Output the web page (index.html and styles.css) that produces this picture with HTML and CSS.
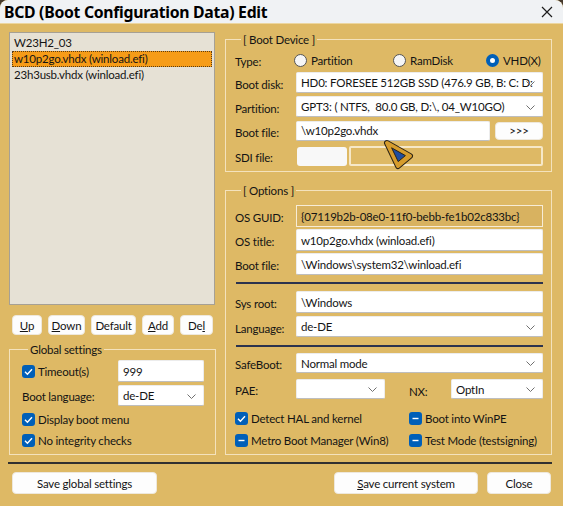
FILE: index.html
```html
<!DOCTYPE html>
<html lang="en">
<head>
    <meta charset="UTF-8">
    <meta name="viewport" content="width=device-width, initial-scale=1.0">
    <title>BCD (Boot Configuration Data) Edit</title>

    <link rel="stylesheet" href="styles.css">
</head>
<body>

<div class="window">

    <div class="titlebar">
        <span class="title">BCD (Boot Configuration Data) Edit</span>
        <svg class="close" width="12" height="12" viewBox="0 0 12 12">
            <path d="M1 1 L11 11 M11 1 L1 11" stroke="#1c1c1c" stroke-width="1.2" fill="none"/>
        </svg>
    </div>

    <div class="main">

        <div class="left">

            <div class="list">
                <div class="item">W23H2_03</div>
                <div class="item selected">w10p2go.vhdx (winload.efi)</div>
                <div class="item">23h3usb.vhdx (winload.efi)</div>
            </div>

            <div class="list_buttons">
                <button class="btn btn_up"><u>U</u>p</button>
                <button class="btn btn_down"><u>D</u>own</button>
                <button class="btn btn_default">Default</button>
                <button class="btn btn_add"><u>A</u>dd</button>
                <button class="btn btn_del">De<u>l</u></button>
            </div>

            <fieldset class="group global">
                <legend>Global settings</legend>

                <div class="g_row g_row_timeout">
                    <span class="check"><span class="box"><svg width="13" height="13"><polyline points="3,6.8 5.4,9.2 10,4.2" stroke="#fff" stroke-width="1.4" fill="none"/></svg></span>Timeout(s)</span>
                    <div class="field g_field">999</div>
                </div>

                <div class="g_row g_row_lang">
                    <span class="g_label">Boot language:</span>
                    <div class="field g_field select">de-DE<svg class="chev" width="9" height="5"><polyline points="0.5,0.5 4.5,4.5 8.5,0.5" stroke="#707070" fill="none"/></svg></div>
                </div>

                <div class="g_row g_row_check">
                    <span class="check"><span class="box"><svg width="13" height="13"><polyline points="3,6.8 5.4,9.2 10,4.2" stroke="#fff" stroke-width="1.4" fill="none"/></svg></span>Display boot menu</span>
                </div>

                <div class="g_row g_row_check last">
                    <span class="check"><span class="box"><svg width="13" height="13"><polyline points="3,6.8 5.4,9.2 10,4.2" stroke="#fff" stroke-width="1.4" fill="none"/></svg></span>No integrity checks</span>
                </div>
            </fieldset>

        </div>

        <div class="right">

            <fieldset class="group device">
                <legend>[ Boot Device ]</legend>

                <div class="row row_type">
                    <span class="label">Type:</span>
                    <span class="radio radio_partition"><span class="dot"></span>Partition</span>
                    <span class="radio radio_ramdisk"><span class="dot"></span>RamDisk</span>
                    <span class="radio radio_vhd"><span class="dot on"></span>VHD(X)</span>
                </div>

                <div class="row">
                    <span class="label">Boot disk:</span>
                    <div class="field select">HD0: FORESEE 512GB SSD (476.9 GB, B: C: D:<svg class="chev" width="9" height="5"><polyline points="0.5,0.5 4.5,4.5 8.5,0.5" stroke="#707070" fill="none"/></svg></div>
                </div>

                <div class="row">
                    <span class="label">Partition:</span>
                    <div class="field select">GPT3: ( NTFS,&nbsp; 80.0 GB, D:\, 04_W10GO)<svg class="chev" width="9" height="5"><polyline points="0.5,0.5 4.5,4.5 8.5,0.5" stroke="#707070" fill="none"/></svg></div>
                </div>

                <div class="row row_file">
                    <span class="label">Boot file:</span>
                    <div class="field file_field">\w10p2go.vhdx</div>
                    <button class="btn browse">&gt;&gt;&gt;</button>
                </div>

                <div class="row row_sdi">
                    <span class="label">SDI file:</span>
                    <div class="sdi_small"></div>
                    <div class="sdi_big"></div>
                </div>
            </fieldset>

            <fieldset class="group options">
                <legend>[ Options ]</legend>

                <div class="row row_tall">
                    <span class="label">OS GUID:</span>
                    <div class="field guid">{07119b2b-08e0-11f0-bebb-fe1b02c833bc}</div>
                </div>

                <div class="row row_tall">
                    <span class="label">OS title:</span>
                    <div class="field">w10p2go.vhdx (winload.efi)</div>
                </div>

                <div class="row row_tall">
                    <span class="label">Boot file:</span>
                    <div class="field">\Windows\system32\winload.efi</div>
                </div>

                <div class="sep sep_1"></div>

                <div class="row row_tall">
                    <span class="label">Sys root:</span>
                    <div class="field">\Windows</div>
                </div>

                <div class="row">
                    <span class="label">Language:</span>
                    <div class="field select">de-DE<svg class="chev" width="9" height="5"><polyline points="0.5,0.5 4.5,4.5 8.5,0.5" stroke="#707070" fill="none"/></svg></div>
                </div>

                <div class="sep sep_2"></div>

                <div class="row row_safe">
                    <span class="label">SafeBoot:</span>
                    <div class="field select">Normal mode<svg class="chev" width="9" height="5"><polyline points="0.5,0.5 4.5,4.5 8.5,0.5" stroke="#707070" fill="none"/></svg></div>
                </div>

                <div class="row row_pae">
                    <span class="label">PAE:</span>
                    <div class="field select pae_field"><svg class="chev" width="9" height="5"><polyline points="0.5,0.5 4.5,4.5 8.5,0.5" stroke="#707070" fill="none"/></svg></div>
                    <span class="nx_label">NX:</span>
                    <div class="field select nx_field">OptIn<svg class="chev" width="9" height="5"><polyline points="0.5,0.5 4.5,4.5 8.5,0.5" stroke="#707070" fill="none"/></svg></div>
                </div>

                <div class="checks">
                    <span class="check"><span class="box"><svg width="13" height="13"><polyline points="3,6.8 5.4,9.2 10,4.2" stroke="#fff" stroke-width="1.4" fill="none"/></svg></span>Detect HAL and kernel</span>
                    <span class="check"><span class="box"><svg width="13" height="13"><path d="M3.5 6.5 H9.5" stroke="#fff" stroke-width="1.4"/></svg></span>Boot into WinPE</span>
                    <span class="check"><span class="box"><svg width="13" height="13"><path d="M3.5 6.5 H9.5" stroke="#fff" stroke-width="1.4"/></svg></span>Metro Boot Manager (Win8)</span>
                    <span class="check"><span class="box"><svg width="13" height="13"><path d="M3.5 6.5 H9.5" stroke="#fff" stroke-width="1.4"/></svg></span>Test Mode (testsigning)</span>
                </div>
            </fieldset>

        </div>

    </div>

    <div class="hr"></div>

    <div class="footer">
        <button class="btn big_btn btn_global">Save <u>g</u>lobal settings</button>
        <button class="btn big_btn btn_current"><u>S</u>ave current system</button>
        <button class="btn big_btn btn_close">Close</button>
    </div>

    <svg class="pointer" width="32" height="32" viewBox="0 0 32 32">
        <polygon points="4,4 27,17 15,27" fill="#2a2214" stroke="#2a2214" stroke-width="6" stroke-linejoin="round"/>
        <polygon points="4,4 27,17 15,27" fill="#d69c2c" stroke="#d69c2c" stroke-width="4" stroke-linejoin="round"/>
        <polygon points="8.6,8.8 22.4,16.6 15.2,22.6" fill="#1f4d9e" stroke="#2a2214" stroke-width="1"/>
    </svg>

</div>

</body>
</html>
```

FILE: styles.css
```css
*{
    box-sizing: border-box;
}

html, body{
    margin: 0;
    padding: 0;
}

body{
    background-color: rgb(70, 58, 45);
    font-family: Lato, "Liberation Sans", sans-serif;
    font-size: 11.5px;
    letter-spacing: -0.2px;
    color: rgb(20, 20, 20);
}

.window{
    position: relative;
    width: 563px;
    height: 506px;
    background-color: rgb(222, 185, 101);
    border-radius: 8px 8px 0 0;
    overflow: hidden;
}

.titlebar{
    height: 24px;
    background-color: rgb(240, 242, 244);
    border-bottom: 1px solid rgb(236, 214, 160);
    display: flex;
    align-items: center;
    justify-content: space-between;
    padding: 0 10px 0 4px;
}

.title{
    font-family: "Noto Sans", sans-serif;
    font-size: 15.8px;
    font-weight: bold;
    letter-spacing: -0.3px;
    color: black;
}

.close{
    margin-top: 1px;
}

.main{
    display: flex;
    gap: 9px;
    padding: 0 11px 0 9px;
}

/* left column */

.left{
    width: 207px;
    padding-top: 8px;
}

.list{
    height: 273px;
    width: 206px;
    border: 1px solid rgb(166, 160, 148);
    background-color: rgb(230, 225, 213);
    padding: 2px 2px;
}

.item{
    height: 16px;
    line-height: 16px;
    padding-left: 2px;
    white-space: nowrap;
}

.item.selected{
    background-color: rgb(246, 156, 24);
    outline: 1px dotted rgb(90, 60, 20);
    outline-offset: -1px;
}

.list_buttons{
    display: flex;
    gap: 6px;
    margin-top: 10px;
    padding-left: 3px;
}

.btn{
    font-family: inherit;
    font-size: 11.5px;
    letter-spacing: -0.2px;
    color: rgb(20, 20, 20);
    background-color: rgb(253, 253, 253);
    border: 1px solid rgb(238, 232, 220);
    border-radius: 4px;
    padding: 0;
    height: 20px;
    cursor: pointer;
}

.btn_up{ width: 30px; }
.btn_down{ width: 37px; }
.btn_default{ width: 45px; }
.btn_add{ width: 32px; }
.btn_del{ width: 33px; }

.group{
    border: 1px solid rgb(244, 226, 188);
    margin: 0;
    padding: 0;
    min-width: 0;
}

.group legend{
    margin-left: 6px;
    padding: 0 2px;
    line-height: 15px;
}

.global{
    margin-top: 7px;
    height: 113px;
    padding: 3px 11px 0 12px;
}

.g_row{
    display: flex;
    align-items: center;
    justify-content: space-between;
}

.g_row_timeout{
    height: 22px;
}

.g_row_lang{
    height: 21px;
    margin-top: 3px;
}

.g_row_check{
    height: 20px;
    margin-top: 3px;
}

.g_row_check.last{
    margin-top: 1px;
}

.g_label{
    padding-top: 2px;
}

/* fields */

.field{
    position: relative;
    flex: 1;
    height: 100%;
    background-color: white;
    border: 1px solid rgb(236, 236, 236);
    border-bottom-color: rgb(190, 190, 190);
    border-radius: 2px;
    padding: 0 16px 0 4px;
    display: flex;
    align-items: center;
    white-space: nowrap;
    overflow: hidden;
}

.field.g_field{
    width: 86px;
    flex: none;
}

.chev{
    position: absolute;
    right: 7px;
    top: 50%;
    margin-top: -2px;
}

.check{
    display: flex;
    align-items: center;
    white-space: nowrap;
}

.box{
    width: 13px;
    height: 13px;
    border-radius: 3px;
    background-color: rgb(0, 95, 184);
    margin-right: 3px;
    display: flex;
}

/* right column */

.right{
    width: 327px;
    padding-top: 8px;
}

.device{
    padding: 4px 8px 5px 9px;
}

.row{
    display: flex;
    align-items: center;
    height: 21px;
    margin-top: 3px;
}

.label{
    width: 61px;
    padding-top: 3px;
    flex-shrink: 0;
}

.row_type{
    height: 18px;
    margin-top: 0;
}

.radio{
    display: flex;
    align-items: center;
}

.radio_partition{
    width: 99px;
    margin-left: -2px;
}

.radio_ramdisk{
    width: 93px;
}

.dot{
    width: 13px;
    height: 13px;
    border-radius: 50%;
    border: 1px solid rgb(85, 85, 85);
    background-color: rgb(246, 246, 246);
    margin-right: 4px;
}

.dot.on{
    border: 4px solid rgb(0, 95, 184);
    background-color: white;
}

.row_file{
    margin-top: 3px;
}

.field.file_field{
    flex: none;
    width: 194px;
    height: 20px;
}

.browse{
    width: 48px;
    height: 18px;
    margin-left: 5px;
}

.row_sdi{
    height: 20px;
    margin-top: 5px;
}

.sdi_small{
    width: 50px;
    height: 19px;
    margin-left: 1px;
    background-color: rgb(248, 248, 248);
    border-radius: 3px;
}

.sdi_big{
    flex: 1;
    height: 20px;
    margin-left: 2px;
    border: 2px solid rgb(246, 232, 200);
    border-radius: 2px;
}

.options{
    margin-top: 11px;
    height: 272px;
    padding: 5px 8px 0 9px;
}

.row_tall{
    height: 22px;
    margin-top: 2px;
}

.field.guid{
    background-color: rgb(216, 178, 96);
    border: 1px solid rgb(247, 236, 214);
    border-radius: 0;
}

.sep{
    height: 2px;
    background-color: rgb(44, 51, 78);
    margin-left: 1px;
}

.sep_1{
    margin-top: 7px;
    margin-bottom: 7px;
}

.sep_2{
    margin-top: 8px;
    margin-bottom: 6px;
}

.row_safe{
    height: 20px;
    margin-top: 0;
}

.row_pae{
    height: 20px;
    margin-top: 6px;
}

.field.pae_field{
    flex: none;
    width: 89px;
}

.nx_label{
    width: 43px;
    margin-left: 24px;
    padding-top: 4px;
}

.field.nx_field{
    flex: none;
    width: 92px;
}

.checks{
    display: grid;
    grid-template-columns: 174px 1fr;
    grid-auto-rows: 20px;
    row-gap: 2px;
    margin-top: 9px;
    align-items: center;
}

/* bottom */

.hr{
    height: 2px;
    background-color: rgb(48, 48, 48);
    margin: 7px 11px 0 8px;
}

.footer{
    display: flex;
    padding: 8px 12px 0 12px;
}

.big_btn{
    height: 22px;
}

.btn_global{
    width: 145px;
}

.btn_current{
    width: 144px;
    margin-left: auto;
}

.btn_close{
    width: 64px;
    margin-left: 9px;
}

.pointer{
    position: absolute;
    left: 383px;
    top: 139px;
}
```
